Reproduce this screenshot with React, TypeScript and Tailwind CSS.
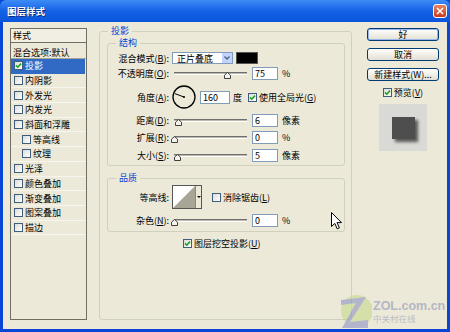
import React from "react";

const FONT = "font-['Noto_Sans_CJK_SC','Noto_Sans',sans-serif]";

function Check({ checked }: { checked?: boolean }) {
  return (
    <span className="flex h-[9px] w-[9px] shrink-0 items-center justify-center border border-[#3f5d7d] bg-gradient-to-br from-[#dcdcd7] to-white">
      {checked && (
        <svg viewBox="0 0 7 7" className="h-[7px] w-[7px]">
          <path d="M1 3.4 L2.8 5.2 L6 1.6" stroke="#21a121" strokeWidth="1.6" fill="none" />
        </svg>
      )}
    </span>
  );
}

function Group({ title, className, children }: { title: string; className: string; children: React.ReactNode }) {
  return (
    <div className={"relative rounded-[3px] border border-[#d0d0bf] " + className}>
      <span className="absolute left-[8px] top-[-7px] bg-[#ece9d8] px-[3px] leading-[12px] text-[#0046d5]">{title}</span>
      {children}
    </div>
  );
}

function Label({ children }: { children: React.ReactNode }) {
  return <span className="w-[63px] shrink-0 pr-[2px] text-right leading-none">{children}</span>;
}

function Field({ value, className = "w-[26px]" }: { value: string; className?: string }) {
  return (
    <div className={"flex h-[13px] shrink-0 items-center border border-[#7f9db9] bg-white pl-[2px] leading-none " + className}>
      {value}
    </div>
  );
}

function Slider({ thumb }: { thumb: string }) {
  return (
    <div className="relative h-[13px] w-[76px] shrink-0">
      <div className="absolute left-[3px] right-0 top-[5px] h-[3px] border-b border-t border-b-white border-t-[#6f6f6f] bg-[#bdbaad]" />
      <svg viewBox="0 0 7 7" className={"absolute top-[5px] h-[7px] w-[7px] " + thumb}>
        <path d="M3.5 0.5 L6.5 3.2 L6.5 6.5 L0.5 6.5 L0.5 3.2 Z" fill="#f4f3ee" stroke="#404040" strokeWidth="1" />
      </svg>
    </div>
  );
}

function SliderRow({ label, thumb, value, unit }: { label: React.ReactNode; thumb: string; value: string; unit: string }) {
  return (
    <div className="flex h-[13px] items-center">
      <Label>{label}</Label>
      <Slider thumb={thumb} />
      <Field value={value} className="ml-[5px] w-[26px]" />
      <span className="ml-[4px] leading-none">{unit}</span>
    </div>
  );
}

const items = [
  { label: "投影", checked: true, selected: true },
  { label: "内阴影" },
  { label: "外发光" },
  { label: "内发光" },
  { label: "斜面和浮雕" },
  { label: "等高线", sub: true },
  { label: "纹理", sub: true },
  { label: "光泽" },
  { label: "颜色叠加" },
  { label: "渐变叠加" },
  { label: "图案叠加" },
  { label: "描边" },
];

function StyleList() {
  return (
    <div className="flex h-[292px] w-[77px] shrink-0 flex-col border border-[#716f64] bg-[#ece9d8]">
      <div className="flex h-[14px] items-center border-b border-[#716f64] bg-[#f1efe4] pl-[2px] leading-none">样式</div>
      <div className="flex h-[16px] items-center border-b border-[#a7a595] pl-[2px] pt-[3px] leading-none">混合选项:默认</div>
      {items.map((it) => (
        <div
          key={it.label}
          className={
            "flex h-[14.7px] items-center gap-[2px] border-b leading-none " +
            (it.sub ? "pl-[11px] " : "pl-[3px] ") +
            (it.selected ? "mr-[1px] border-[#316ac5] bg-[#316ac5] text-white" : "border-[#f6f5ef]")
          }
        >
          <Check checked={it.checked} />
          <span>{it.label}</span>
        </div>
      ))}
    </div>
  );
}

function Dial() {
  return (
    <svg viewBox="0 0 24 24" className="ml-[1px] h-[24px] w-[24px] shrink-0">
      <circle cx="12" cy="12" r="11" fill="none" stroke="#000" strokeWidth="1.3" />
      <line x1="12" y1="12" x2="2.8" y2="8.6" stroke="#000" strokeWidth="1" />
      <circle cx="12" cy="12" r="1" fill="#000" />
    </svg>
  );
}

function Button({ children, primary }: { children: React.ReactNode; primary?: boolean }) {
  return (
    <button
      className={
        "flex h-[13px] w-[72px] items-center justify-center rounded-[3px] border border-[#003c74] bg-gradient-to-b from-white to-[#e3e0d2] leading-none " +
        (primary ? "shadow-[inset_0_0_0_1px_#9ab8ee]" : "")
      }
    >
      {children}
    </button>
  );
}

export default function App() {
  return (
    <div className={"relative flex h-[332px] w-[450px] flex-col overflow-hidden bg-[#0a46d6] text-[9px] text-black " + FONT}>
      <div className="flex h-[22px] shrink-0 items-center rounded-t-[6px] bg-gradient-to-b from-[#3d8cf5] via-[#1462e6] to-[#0b55dc] pl-[7px] pr-[3px]">
        <span className="text-[9.5px] font-bold text-white [text-shadow:1px_1px_0_#0a2a80]">图层样式</span>
        <span className="ml-auto flex h-[14px] w-[14px] items-center justify-center rounded-[3px] border border-white bg-gradient-to-b from-[#e8825e] to-[#c9391a]">
          <svg viewBox="0 0 8 8" className="h-[8px] w-[8px]">
            <path d="M1 1 L7 7 M7 1 L1 7" stroke="#fff" strokeWidth="1.6" />
          </svg>
        </span>
      </div>

      <div className="mx-[3px] mb-[3px] flex flex-1 bg-[#ece9d8] pl-[7px] pt-[6px]">
        <StyleList />

        <Group title="投影" className="ml-[12px] mt-[3px] flex h-[289px] w-[253px] flex-col pl-[7px] pr-[6px] pt-[11px]">
          <Group title="结构" className="flex h-[123px] flex-col pt-[8px]">
            <div className="flex h-[12px] items-center">
              <Label>
                混合模式(<u>B</u>):
              </Label>
              <div className="ml-[1px] flex h-[12px] w-[61px] items-center border border-[#7f9db9] bg-white pl-[4px] leading-none">
                <span>正片叠底</span>
                <span className="ml-auto flex h-full w-[10px] items-center justify-center bg-[#c3d3fd]">
                  <svg viewBox="0 0 6 4" className="h-[4px] w-[6px]">
                    <path d="M0.5 0.5 L3 3 L5.5 0.5" stroke="#4d6185" strokeWidth="1.3" fill="none" />
                  </svg>
                </span>
              </div>
              <span className="ml-[3px] h-[12px] w-[22px] border border-[#555] bg-black" />
            </div>
            <div className="mt-[3px]">
              <SliderRow label={<>不透明度(<u>O</u>):</>} thumb="left-[53px]" value="75" unit="%" />
            </div>
            <div className="mt-[5px] flex h-[24px] items-center">
              <Label>
                角度(<u>A</u>):
              </Label>
              <Dial />
              <Field value="160" className="ml-[4px] w-[30px]" />
              <span className="ml-[3px] leading-none">度</span>
              <span className="ml-[6px]">
                <Check checked />
              </span>
              <span className="ml-[2px] leading-none">
                使用全局光(<u>G</u>)
              </span>
            </div>
            <div className="mt-[5px]">
              <SliderRow label={<>距离(<u>D</u>):</>} thumb="left-[4px]" value="6" unit="像素" />
            </div>
            <div className="mt-[4px]">
              <SliderRow label={<>扩展(<u>R</u>):</>} thumb="left-0" value="0" unit="%" />
            </div>
            <div className="mt-[5px]">
              <SliderRow label={<>大小(<u>S</u>):</>} thumb="left-[3px]" value="5" unit="像素" />
            </div>
          </Group>

          <Group title="品质" className="mt-[12px] flex h-[54px] flex-col pt-[6px]">
            <div className="flex h-[24px] items-center">
              <Label>等高线:</Label>
              <div className="ml-[1px] flex h-[24px] w-[30px] border border-[#555] bg-white">
                <svg viewBox="0 0 22 22" className="h-full w-[22px]" preserveAspectRatio="none">
                  <path d="M0 22 L22 0 L22 22 Z" fill="#a8a496" />
                </svg>
                <span className="flex flex-1 items-center justify-center border-l border-[#888] bg-[#ece9d8]">
                  <svg viewBox="0 0 4 2" className="h-[2px] w-[4px]">
                    <path d="M0 0 L4 0 L2 2 Z" fill="#000" />
                  </svg>
                </span>
              </div>
              <span className="ml-[10px]">
                <Check />
              </span>
              <span className="ml-[2px] leading-none">
                消除锯齿(<u>L</u>)
              </span>
            </div>
            <div className="mt-[5px]">
              <SliderRow label={<>杂色(<u>N</u>):</>} thumb="left-0" value="0" unit="%" />
            </div>
          </Group>

          <div className="ml-[76px] mt-[7px] flex items-center gap-[2px] leading-none">
            <Check checked />
            <span>
              图层挖空投影(<u>U</u>)
            </span>
          </div>
        </Group>

        <div className="ml-[15px] flex w-[72px] flex-col items-center">
          <Button primary>好</Button>
          <div className="mt-[7px]">
            <Button>取消</Button>
          </div>
          <div className="mt-[7px]">
            <Button>新建样式(W)...</Button>
          </div>
          <div className="mt-[7px] flex items-center gap-[2px] leading-none">
            <Check checked />
            <span>
              预览(<u>V</u>)
            </span>
          </div>
          <div className="mt-[7px] flex h-[47px] w-[48px] items-center justify-center bg-[#d9d9d6]">
            <div className="h-[22px] w-[23px] bg-[#4e4e4e] shadow-[3px_3px_3px_rgba(0,0,0,0.6)]" />
          </div>
        </div>
      </div>

      {/* mouse pointer */}
      <svg viewBox="0 0 12 18" className="absolute left-[331px] top-[212px] h-[18px] w-[12px]">
        <path d="M0.5 0.5 L0.5 14.5 L3.8 11.4 L6.2 16.8 L8.4 15.8 L6 10.6 L10.5 10.6 Z" fill="#fff" stroke="#000" strokeWidth="1" />
      </svg>

      {/* watermark */}
      <div className="pointer-events-none absolute left-[338px] top-[292px] flex items-center opacity-60">
        <svg viewBox="0 0 34 38" className="h-[38px] w-[34px]">
          <circle cx="19" cy="19" r="16" fill="#c7d98a" />
          <path d="M3 8 L28 5 L12 30 L30 28 L30 36 L4 36 L18 11 L3 13 Z" fill="#8d93c4" />
        </svg>
        <div className="ml-[1px] flex flex-col leading-none">
          <span className="font-['Liberation_Sans',sans-serif] text-[12.5px] font-bold text-[#8f96b8]">ZOL.com.cn</span>
          <span className="mt-[2px] text-[8.5px] text-[#9aa0ba]">中关村在线</span>
        </div>
      </div>
    </div>
  );
}
